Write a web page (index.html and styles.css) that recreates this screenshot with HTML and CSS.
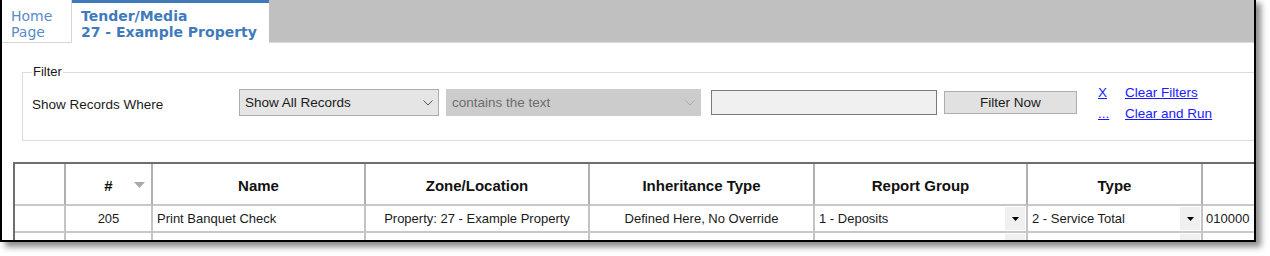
FILE: index.html
```html
<!DOCTYPE html>
<html>
<head>
<meta charset="utf-8">
<link rel="stylesheet" href="styles.css">
</head>
<body>
<div class="frame">
  <div class="tabbar">
    <div class="tab home">Home<br>Page</div>
    <div class="tab active">Tender/Media<br>27 - Example Property</div>
    <div class="tabfill"></div>
  </div>
  <div class="content">
    <fieldset class="filter">
      <legend>Filter</legend>
      <div class="filter-row">
        <span class="label">Show Records Where</span>
        <div class="select sel1"><span>Show All Records</span><svg class="chev" width="10" height="6" viewBox="0 0 10 6"><path d="M0.5 0.5 L5 5 L9.5 0.5" fill="none" stroke="#555" stroke-width="1"/></svg></div>
        <div class="select sel2 disabled"><span>contains the text</span><svg class="chev" width="10" height="6" viewBox="0 0 10 6"><path d="M0.5 0.5 L5 5 L9.5 0.5" fill="none" stroke="#aaa" stroke-width="1"/></svg></div>
        <div class="textbox"></div>
        <div class="button">Filter Now</div>
        <div class="links">
          <div class="linkrow"><a class="lk sym">X</a><a class="lk">Clear Filters</a></div>
          <div class="linkrow"><a class="lk sym">...</a><a class="lk">Clear and Run</a></div>
        </div>
      </div>
    </fieldset>
    <div class="grid">
      <div class="row head">
        <div class="cell c0"></div>
        <div class="cell c1"><span>#</span><svg class="sort" width="11" height="6" viewBox="0 0 11 6"><path d="M0 0 H11 L5.5 6 Z" fill="#a9a9a9"/></svg></div>
        <div class="cell c2">Name</div>
        <div class="cell c3">Zone/Location</div>
        <div class="cell c4">Inheritance Type</div>
        <div class="cell c5">Report Group</div>
        <div class="cell c6">Type</div>
        <div class="cell c7"></div>
      </div>
      <div class="row data">
        <div class="cell c0"></div>
        <div class="cell c1 center">205</div>
        <div class="cell c2 left">Print Banquet Check</div>
        <div class="cell c3 center">Property: 27 - Example Property</div>
        <div class="cell c4 center">Defined Here, No Override</div>
        <div class="cell c5 combo"><span>1 - Deposits</span><div class="dd"><svg width="7" height="4" viewBox="0 0 7 4"><path d="M0 0 H7 L3.5 4 Z" fill="#000"/></svg></div></div>
        <div class="cell c6 combo"><span>2 - Service Total</span><div class="dd"><svg width="7" height="4" viewBox="0 0 7 4"><path d="M0 0 H7 L3.5 4 Z" fill="#000"/></svg></div></div>
        <div class="cell c7 left">010000</div>
      </div>
      <div class="row data short">
        <div class="cell c0"></div>
        <div class="cell c1"></div>
        <div class="cell c2"></div>
        <div class="cell c3"></div>
        <div class="cell c4"></div>
        <div class="cell c5 combo"><span></span><div class="dd"></div></div>
        <div class="cell c6 combo"><span></span><div class="dd"></div></div>
        <div class="cell c7"></div>
      </div>
    </div>
  </div>
</div>
</body>
</html>
```

FILE: styles.css
```css
html, body {
  margin: 0;
  padding: 0;
  background: #ffffff;
}
body {
  width: 1270px;
  height: 256px;
  overflow: hidden;
}
.frame {
  margin-top: -2px;
  width: 1252px;
  height: 240px;
  border: 2px solid #000;
  background: #fff;
  box-shadow: 5px 5px 6px rgba(0, 0, 0, 0.45);
  overflow: hidden;
  display: flex;
  flex-direction: column;
}
.tabbar {
  display: flex;
  height: 43px;
  flex: none;
  font-family: "DejaVu Sans", Verdana, sans-serif;
  font-size: 14px;
  line-height: 16px;
}
.tab {
  box-sizing: border-box;
  height: 43px;
  padding: 8px 0 0 9px;
}
.home {
  width: 70px;
  color: #5a8cc6;
  border-right: 1px solid #d6d6d6;
  border-bottom: 1px solid #d6d6d6;
}
.active {
  width: 197px;
  color: #3f7bbb;
  font-weight: bold;
  border-top: 3px solid #3f7bbb;
  padding-top: 5px;
  background: #fff;
}
.tabfill {
  flex: 1;
  background: #c0c0c0;
  border-bottom: 1px solid #dcdcdc;
}
.content {
  flex: 1;
  font-family: "Liberation Sans", Arial, sans-serif;
  font-size: 13px;
  color: #1a1a1a;
}
.filter {
  margin: 22px 0 0 20px;
  width: 1260px;
  height: 76px;
  box-sizing: border-box;
  border: 1px solid #dcdcdc;
  padding: 0 0 0 9px;
  min-width: 0;
}
.filter legend {
  padding: 0 1px;
  margin-left: 0;
  font-size: 13px;
  line-height: 14px;
  color: #1a1a1a;
}
.filter-row {
  display: flex;
  align-items: flex-start;
  margin-top: 10px;
}
.label {
  width: 207px;
  margin-top: 8px;
  font-size: 13.5px;
}
.select {
  box-sizing: border-box;
  height: 27px;
  border: 1px solid #adadad;
  background: #e5e5e5;
  display: flex;
  align-items: center;
  justify-content: space-between;
  padding: 0 5px 0 5px;
  font-size: 13.5px;
}
.sel1 { width: 200px; }
.sel2 {
  width: 255px;
  margin-left: 7px;
  background: #cccccc;
  border-color: #cccccc;
  color: #6d6d6d;
}
.textbox {
  box-sizing: border-box;
  width: 226px;
  height: 25px;
  margin: 1px 0 0 10px;
  border: 1px solid #7a7a7a;
  background: #f0f0f0;
}
.button {
  box-sizing: border-box;
  width: 133px;
  height: 23px;
  margin: 2px 0 0 7px;
  border: 1px solid #adadad;
  background: #e1e1e1;
  text-align: center;
  line-height: 21px;
  font-size: 13.5px;
}
.links {
  margin: -4px 0 0 21px;
  display: flex;
  flex-direction: column;
  gap: 5px;
}
.linkrow {
  display: flex;
}
.lk {
  color: #1a1aff;
  text-decoration: underline;
  font-size: 13.5px;
  line-height: 16px;
}
.lk.sym {
  width: 27px;
}
.grid {
  margin: 21px 0 0 11px;
  width: 1260px;
  border-top: 2px solid #6e6e6e;
  border-left: 2px solid #6e6e6e;
}
.row {
  display: flex;
}
.cell {
  box-sizing: border-box;
  flex: none;
  display: flex;
  align-items: center;
  justify-content: center;
  border-right: 2px solid #bdbdbd;
  border-bottom: 2px solid #bdbdbd;
  white-space: nowrap;
  overflow: hidden;
}
.head .cell {
  height: 42px;
  padding-top: 2px;
  font-weight: bold;
  font-size: 15px;
  color: #111;
  border-right-color: #b0b0b0;
  border-bottom-color: #c8c8c8;
}
.data .cell {
  height: 27px;
  border-right-color: #c4c4c4;
  border-bottom-color: #c8c8c8;
}
.data.short .cell { height: 10px; }
.c0 { width: 51px; }
.c1 { width: 87px; position: relative; }
.c2 { width: 213px; }
.c3 { width: 224px; }
.c4 { width: 225px; }
.c5 { width: 213px; }
.c6 { width: 175px; }
.c7 { width: 80px; border-right: none; }
.sort {
  position: absolute;
  right: 6px;
  top: 18px;
}
.left { justify-content: flex-start; padding-left: 4px; }
.c7.left { padding-left: 3px; }
.combo {
  justify-content: space-between;
  padding-left: 4px;
}
.dd {
  width: 20px;
  align-self: stretch;
  background: #f0f0f0;
  display: flex;
  align-items: center;
  justify-content: center;
  margin: 1px 1px 1px 0;
}
```
